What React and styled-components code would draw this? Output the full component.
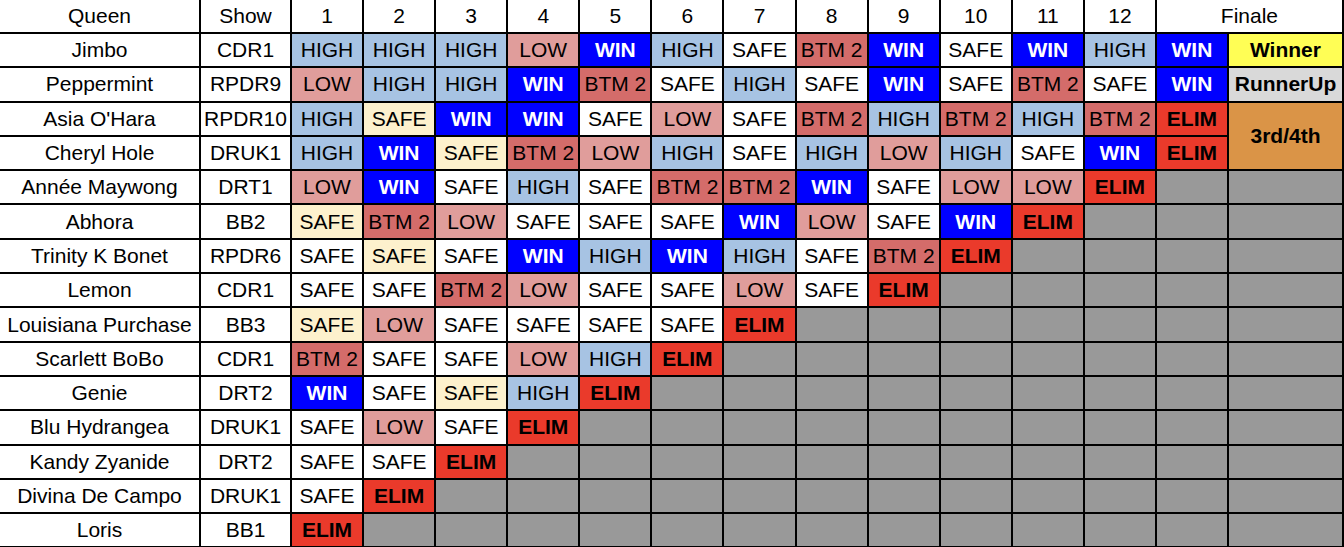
import React from "react";
import styled, { createGlobalStyle } from "styled-components";

const GlobalStyle = createGlobalStyle`
  html, body {
    margin: 0;
    padding: 0;
    background: #fff;
    overflow: hidden;
  }
  body {
    font-family: "Liberation Sans", Arial, sans-serif;
  }
`;

// colour + weight for each kind of result
const tones = {
  H: { bg: "#a7c3e3", color: "#000", bold: false, text: "HIGH" },
  L: { bg: "#e09d9b", color: "#000", bold: false, text: "LOW" },
  B: { bg: "#d46c6a", color: "#000", bold: false, text: "BTM 2" },
  W: { bg: "#0000ff", color: "#fff", bold: true, text: "WIN" },
  S: { bg: "#ffffff", color: "#000", bold: false, text: "SAFE" },
  Y: { bg: "#fdf1cd", color: "#000", bold: false, text: "SAFE" },
  E: { bg: "#ea3a2b", color: "#000", bold: true, text: "ELIM" },
  X: { bg: "#999999", color: "#000", bold: false, text: "" },
};

const places = {
  winner: { bg: "#fffe55", text: "Winner" },
  runner: { bg: "#d9d9d9", text: "RunnerUp" },
  third: { bg: "#da9447", text: "3rd/4th" },
};

const queens = [
  { name: "Jimbo", show: "CDR1", eps: "HHHLWHSBWSWH", fin: "W", place: "winner" },
  { name: "Peppermint", show: "RPDR9", eps: "LHHWBSHSWSBS", fin: "W", place: "runner" },
  { name: "Asia O'Hara", show: "RPDR10", eps: "HYWWSLSBHBHB", fin: "E", place: "third" },
  { name: "Cheryl Hole", show: "DRUK1", eps: "HWYBLHSHLHSW", fin: "E", place: null },
  { name: "Année Maywong", show: "DRT1", eps: "LWSHSBBWSLLE", fin: "X", place: "gray" },
  { name: "Abhora", show: "BB2", eps: "YBLSSSWLSWEX", fin: "X", place: "gray" },
  { name: "Trinity K Bonet", show: "RPDR6", eps: "SYSWHWHSBEXX", fin: "X", place: "gray" },
  { name: "Lemon", show: "CDR1", eps: "SSBLSSLSEXXX", fin: "X", place: "gray" },
  { name: "Louisiana Purchase", show: "BB3", eps: "YLSSSSEXXXXX", fin: "X", place: "gray" },
  { name: "Scarlett BoBo", show: "CDR1", eps: "BSSLHEXXXXXX", fin: "X", place: "gray" },
  { name: "Genie", show: "DRT2", eps: "WSYHEXXXXXXX", fin: "X", place: "gray" },
  { name: "Blu Hydrangea", show: "DRUK1", eps: "SLSEXXXXXXXX", fin: "X", place: "gray" },
  { name: "Kandy Zyanide", show: "DRT2", eps: "SSEXXXXXXXXX", fin: "X", place: "gray" },
  { name: "Divina De Campo", show: "DRUK1", eps: "SEXXXXXXXXXX", fin: "X", place: "gray" },
  { name: "Loris", show: "BB1", eps: "EXXXXXXXXXXX", fin: "X", place: "gray" },
];

const Sheet = styled.div`
  display: grid;
  grid-template-columns: 199px 89px repeat(13, 1fr) 113px;
  grid-template-rows: 32px;
  grid-auto-rows: 32.3px;
  gap: 2px;
  width: 1342px;
  padding: 2px;
  margin: -2px 0 0 -2px;
  background: #000;
`;

const Cell = styled.div`
  display: flex;
  align-items: center;
  justify-content: center;
  background: ${(p) => p.$bg || "#fff"};
  color: ${(p) => p.$color || "#000"};
  font-size: 21px;
  font-weight: ${(p) => (p.$bold ? 700 : 400)};
  white-space: nowrap;
  overflow: hidden;
  grid-column: ${(p) => (p.$cols ? `span ${p.$cols}` : "auto")};
  grid-row: ${(p) => (p.$rows ? `span ${p.$rows}` : "auto")};
`;

const Result = ({ code }) => {
  const t = tones[code];
  return (
    <Cell $bg={t.bg} $color={t.color} $bold={t.bold}>
      {t.text}
    </Cell>
  );
};

const Place = ({ place }) => {
  if (place === "gray") return <Cell $bg="#999999" />;
  const p = places[place];
  return (
    <Cell $bg={p.bg} $bold $rows={place === "third" ? 2 : undefined}>
      {p.text}
    </Cell>
  );
};

export default function App() {
  return (
    <>
      <GlobalStyle />
      <Sheet>
        <Cell>Queen</Cell>
        <Cell>Show</Cell>
        {Array.from({ length: 12 }, (_, i) => (
          <Cell key={i}>{i + 1}</Cell>
        ))}
        <Cell $cols={2}>Finale</Cell>

        {queens.map((q) => (
          <React.Fragment key={q.name}>
            <Cell>{q.name}</Cell>
            <Cell>{q.show}</Cell>
            {q.eps.split("").map((c, i) => (
              <Result key={i} code={c} />
            ))}
            <Result code={q.fin} />
            {q.place && <Place place={q.place} />}
          </React.Fragment>
        ))}
      </Sheet>
    </>
  );
}
